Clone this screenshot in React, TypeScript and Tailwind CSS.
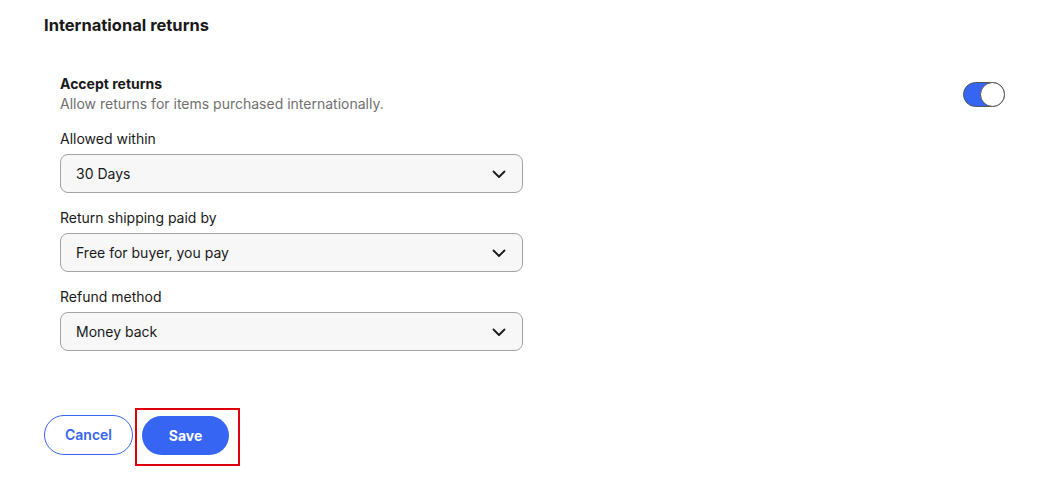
const font = { fontFamily: "Inter, 'Liberation Sans', Arial, sans-serif" };

function Chevron() {
  return (
    <svg width="16" height="16" viewBox="0 0 16 16" fill="none">
      <path d="M2.5 5.5L8 11l5.5-5.5" stroke="#191919" strokeWidth="1.8" strokeLinecap="round" strokeLinejoin="round" />
    </svg>
  );
}

function SelectField({ label, value }: { label: string; value: string }) {
  return (
    <div className="mt-[15px]">
      <div className="text-sm leading-[20px] text-[#191919]">{label}</div>
      <div className="mt-[5px] w-[463px] h-[39px] flex items-center justify-between pl-[15px] pr-[15px] rounded-[8px] border border-[#a3a3a3] bg-[#f7f7f7]">
        <span className="text-sm text-[#191919]">{value}</span>
        <Chevron />
      </div>
    </div>
  );
}

export default function App() {
  return (
    <div className="w-[1048px] h-[483px] bg-white pl-[44px] pr-[43px] pt-[14px]" style={font}>
      <h2 className="text-[16.5px] font-bold leading-[22px] text-[#191919]">International returns</h2>

      <div className="pl-[16px] mt-[38px]">
        <div className="flex items-start justify-between">
          <div>
            <div className="text-sm font-bold leading-[20px] text-[#191919]">Accept returns</div>
            <div className="text-sm leading-[20px] text-[#707070]">Allow returns for items purchased internationally.</div>
          </div>
          <div className="relative mt-[8px] w-[42px] h-[25px] rounded-full bg-[#3665f3] border border-[#555]">
            <div className="absolute right-[-1px] top-[-1px] w-[25px] h-[25px] rounded-full bg-white border border-[#555]" />
          </div>
        </div>

        <div>
          <SelectField label="Allowed within" value="30 Days" />
          <SelectField label="Return shipping paid by" value="Free for buyer, you pay" />
          <SelectField label="Refund method" value="Money back" />
        </div>
      </div>

      <div className="flex items-start mt-[57px]">
        <button className="mt-[7px] w-[89px] h-[40px] rounded-full border border-[#3665f3] bg-white text-sm font-semibold text-[#3665f3]">
          Cancel
        </button>
        <div className="ml-[2px] w-[105px] h-[58px] border-2 border-[#e0000a] pl-[5px] pt-[6px]">
          <button className="w-[87px] h-[39px] rounded-full bg-[#3665f3] text-sm font-bold text-white">Save</button>
        </div>
      </div>
    </div>
  );
}
